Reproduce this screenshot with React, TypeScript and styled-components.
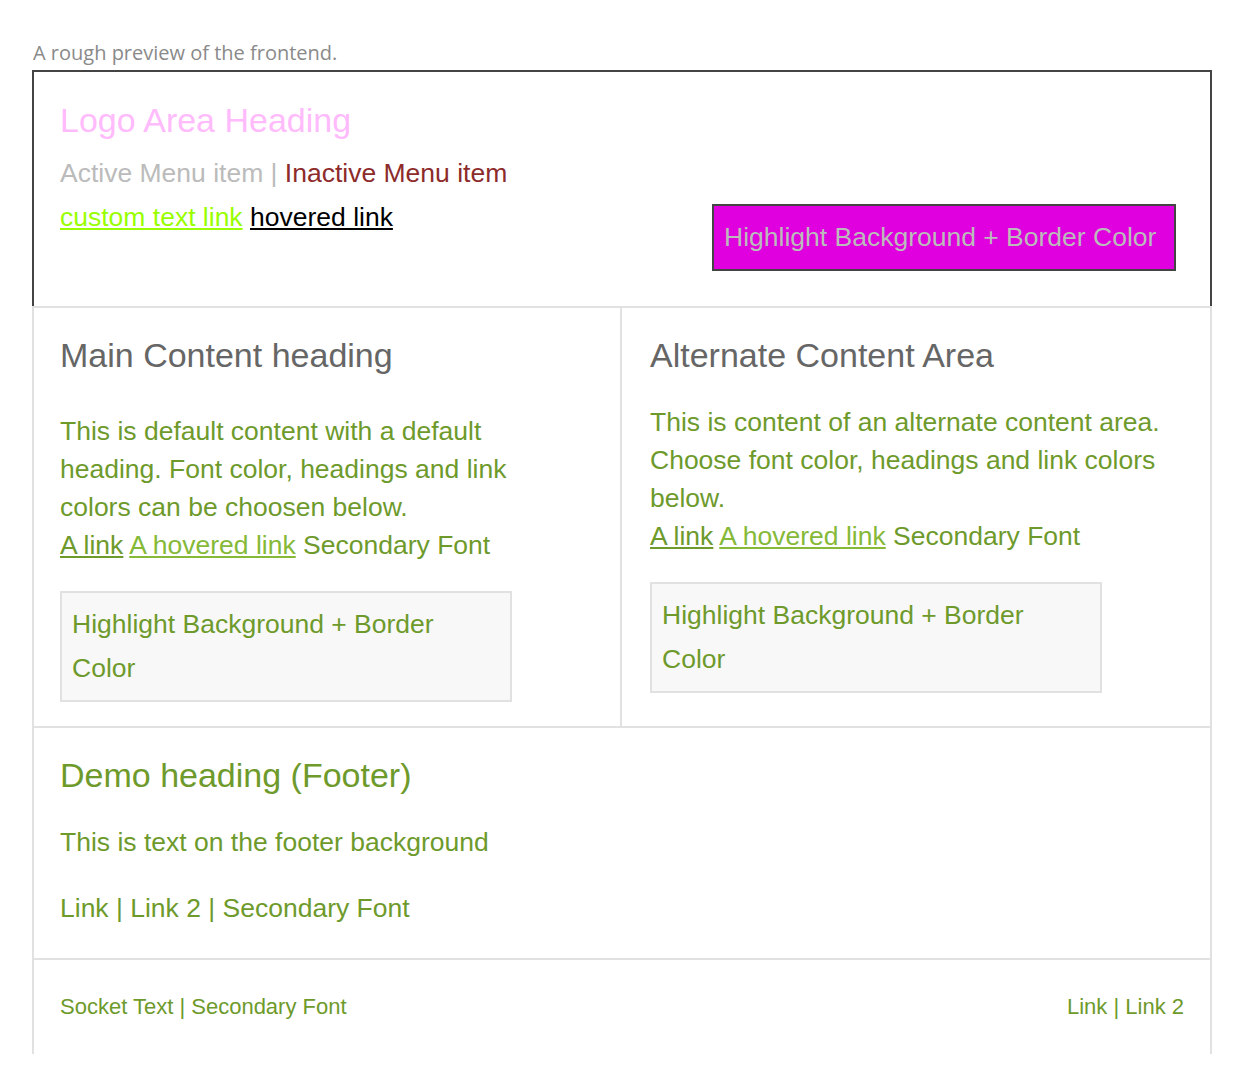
import React from "react";
import styled, { createGlobalStyle } from "styled-components";

const GlobalStyle = createGlobalStyle`
  body {
    margin: 0;
    background: #fff;
    font-family: "Liberation Sans", Arial, sans-serif;
  }
`;

const green = "#6e9a2c";
const greenLight = "#85b937";

const Page = styled.div`
  padding: 40px 32px 0;
`;

const Caption = styled.div`
  font-family: "Open Sans", sans-serif;
  font-size: 20px;
  line-height: 25px;
  color: #8a8a8a;
  margin-bottom: 5px;
  padding-left: 1px;
`;

const Preview = styled.div`
  width: 1180px;
`;

const Header = styled.header`
  border: 2px solid #444;
  border-bottom: none;
  padding: 28px 26px 35px;
`;

const LogoHeading = styled.h1`
  margin: 0;
  font-size: 34px;
  line-height: 41px;
  font-weight: normal;
  color: #ffbbfb;
`;

const Menu = styled.div`
  margin-top: 13px;
  font-size: 26.5px;
  line-height: 38px;
  color: #bbb;
`;

const Inactive = styled.span`
  color: #8d2b2b;
`;

const HeaderRow = styled.div`
  display: flex;
  justify-content: space-between;
  align-items: flex-start;
  margin-top: 6px;
  padding-right: 8px;
`;

const HeaderLinks = styled.div`
  font-size: 26.5px;
  line-height: 38px;
`;

const Link = styled.a<{ $color: string }>`
  color: ${(p) => p.$color};
  text-decoration: underline;
  cursor: pointer;
`;

const HeaderHighlight = styled.div`
  width: 464px;
  box-sizing: border-box;
  margin-top: 6px;
  padding: 12px 10px 13px;
  background: #e000df;
  border: 2px solid #444;
  color: #bbb;
  font-size: 26.5px;
  line-height: 38px;
  white-space: nowrap;
`;

const Section = styled.section`
  border: 2px solid #e1e1e1;
  border-bottom: none;
`;

const Columns = styled(Section)`
  display: grid;
  grid-template-columns: 1fr 1fr;
`;

const Column = styled.div<{ $divider?: boolean; $gap: number }>`
  padding: 27px 26px 24px ${(p) => (p.$divider ? 26 : 28)}px;
  border-right: ${(p) => (p.$divider ? "2px solid #e1e1e1" : "none")};

  h2 {
    margin: 0 0 ${(p) => p.$gap}px;
  }

  p {
    max-width: 520px;
  }
`;

const Heading = styled.h2<{ $color?: string }>`
  margin: 0;
  font-size: 34px;
  line-height: 41px;
  font-weight: normal;
  color: ${(p) => p.$color || "#666"};
`;

const Text = styled.p`
  margin: 0;
  font-size: 26.5px;
  line-height: 38px;
  color: ${green};
`;

const HighlightBox = styled.div`
  width: 452px;
  box-sizing: border-box;
  margin-top: 27px;
  padding: 9px 10px 10px;
  background: #f8f8f8;
  border: 2px solid #e1e1e1;
  color: ${green};
  font-size: 26.5px;
  line-height: 44px;
`;

const Footer = styled(Section)`
  padding: 27px 26px 31px;

  h2 {
    margin-bottom: 27px;
  }
`;

const FooterLinks = styled(Text)`
  margin-top: 28px;
`;

const Socket = styled(Section)`
  height: 94px;
  padding: 0 26px;
  display: flex;
  align-items: center;
  justify-content: space-between;
  font-size: 22px;
  color: ${green};
`;

export default function App() {
  return (
    <>
      <GlobalStyle />
      <Page>
        <Caption>A rough preview of the frontend.</Caption>
        <Preview>
          <Header>
            <LogoHeading>Logo Area Heading</LogoHeading>
            <Menu>
              Active Menu item | <Inactive>Inactive Menu item</Inactive>
            </Menu>
            <HeaderRow>
              <HeaderLinks>
                <Link $color="#9f0">custom text link</Link>{" "}
                <Link $color="#000">hovered link</Link>
              </HeaderLinks>
              <HeaderHighlight>Highlight Background + Border Color</HeaderHighlight>
            </HeaderRow>
          </Header>

          <Columns>
            <Column $divider $gap={36}>
              <Heading>Main Content heading</Heading>
              <Text>
                This is default content with a default heading. Font color, headings and link
                colors can be choosen below.
                <br />
                <Link $color={green}>A link</Link> <Link $color={greenLight}>A hovered link</Link>{" "}
                Secondary Font
              </Text>
              <HighlightBox>Highlight Background + Border Color</HighlightBox>
            </Column>
            <Column $gap={27}>
              <Heading>Alternate Content Area</Heading>
              <Text>
                This is content of an alternate content area. Choose font color, headings and link
                colors below.
                <br />
                <Link $color={green}>A link</Link> <Link $color={greenLight}>A hovered link</Link>{" "}
                Secondary Font
              </Text>
              <HighlightBox>Highlight Background + Border Color</HighlightBox>
            </Column>
          </Columns>

          <Footer>
            <Heading $color={green}>Demo heading (Footer)</Heading>
            <Text>This is text on the footer background</Text>
            <FooterLinks>Link | Link 2 | Secondary Font</FooterLinks>
          </Footer>

          <Socket>
            <span>Socket Text | Secondary Font</span>
            <span>Link | Link 2</span>
          </Socket>
        </Preview>
      </Page>
    </>
  );
}
